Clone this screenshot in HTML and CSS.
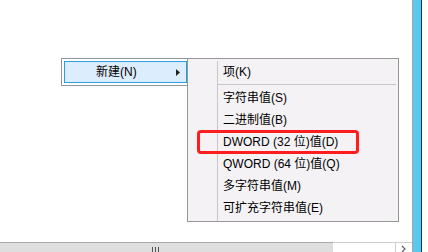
FILE: index.html
```html
<!DOCTYPE html>
<html>

<head>
    <meta charset="UTF-8">
    <link rel="stylesheet" href="styles.css">
    <title>注册表编辑器</title>
</head>

<body>
    <div class="pane">
        <div class="content"></div>
        <div class="hscroll">
            <div class="thumb"><span class="grip"></span></div>
            <div class="track"></div>
            <div class="arrow">
                <svg width="6" height="8" viewBox="0 0 6 8"><path d="M1 1 L4 4 L1 7" fill="none" stroke="#606060" stroke-width="1.2"/></svg>
            </div>
        </div>
    </div>
    <div class="edge"></div>
    <div class="accent"></div>
    <div class="shade"></div>
    <div class="rest"></div>

    <div class="menu">
        <div class="menu-item active">
            <span>新建(N)</span>
            <svg class="sub-arrow" width="4" height="7" viewBox="0 0 4 7"><path d="M0 0 L4 3.5 L0 7 Z" fill="#222"/></svg>
        </div>
    </div>

    <div class="submenu">
        <div class="sub-item">项(K)</div>
        <div class="separator"></div>
        <div class="sub-item">字符串值(S)</div>
        <div class="sub-item">二进制值(B)</div>
        <div class="sub-item">DWORD (32 位)值(D)</div>
        <div class="sub-item">QWORD (64 位)值(Q)</div>
        <div class="sub-item">多字符串值(M)</div>
        <div class="sub-item">可扩充字符串值(E)</div>
    </div>

    <div class="mark"></div>
</body>

</html>
```

FILE: styles.css
```css
html,
body {
    width: 428px;
    height: 252px;
    margin: 0;
    padding: 0;
    overflow: hidden;
}

body {
    position: relative;
    display: flex;
    background: #fff;
    font-family: "Liberation Sans", "Noto Sans CJK SC", sans-serif;
    font-size: 12px;
    color: #000;
}

.pane {
    flex: 1;
    display: flex;
    flex-direction: column;
}

.content {
    flex: 1;
}

.hscroll {
    height: 10px;
    display: flex;
}

.thumb {
    width: 333px;
    background: #dedede;
    border-top: 1px solid #a8a8a8;
    position: relative;
}

.grip {
    position: absolute;
    left: 152px;
    top: 4px;
    width: 7px;
    height: 6px;
    background: repeating-linear-gradient(90deg, #555 0 1px, transparent 1px 3px);
}

.track {
    flex: 1;
    border-top: 1px solid #cfcfcf;
}

.arrow {
    width: 16px;
    border-top: 1px solid #cfcfcf;
    border-left: 1px solid #cfcfcf;
    display: flex;
    justify-content: center;
    padding-top: 2px;
}

.edge {
    width: 1px;
    background: #a5a5a5;
}

.accent {
    width: 8px;
    background: #5bc9ef;
}

.shade {
    width: 1px;
    background: #1d3545;
}

.rest {
    width: 6px;
}

.menu {
    position: absolute;
    left: 61px;
    top: 58px;
    width: 127px;
    height: 28px;
    box-sizing: border-box;
    border: 1px solid #979797;
    background: #fff;
    padding: 2px 0 2px 2px;
}

.menu-item {
    height: 22px;
    box-sizing: border-box;
    display: flex;
    align-items: center;
    padding: 0 6px 0 31px;
    line-height: 20px;
}

.menu-item.active {
    background: #dcedfd;
    border: 1px solid #26a0da;
}

.sub-arrow {
    margin-left: auto;
}

.submenu {
    position: absolute;
    left: 187px;
    top: 58px;
    width: 212px;
    height: 164px;
    box-sizing: border-box;
    border: 1px solid #979797;
    background: #f5f2f5;
    padding: 2px 2px 2px 0;
}

.submenu::before {
    content: "";
    position: absolute;
    left: 29px;
    top: 2px;
    bottom: 0;
    width: 1px;
    background: #c8c5c8;
}

.sub-item {
    height: 22px;
    line-height: 22px;
    padding-left: 35px;
    white-space: nowrap;
}

.separator {
    height: 1px;
    margin: 1px 0 2px 29px;
    background: #c8c5c8;
}

.mark {
    position: absolute;
    left: 197px;
    top: 130px;
    width: 162px;
    height: 24px;
    box-sizing: border-box;
    border: 3px solid #ff1d1d;
    border-radius: 4px;
}
```
